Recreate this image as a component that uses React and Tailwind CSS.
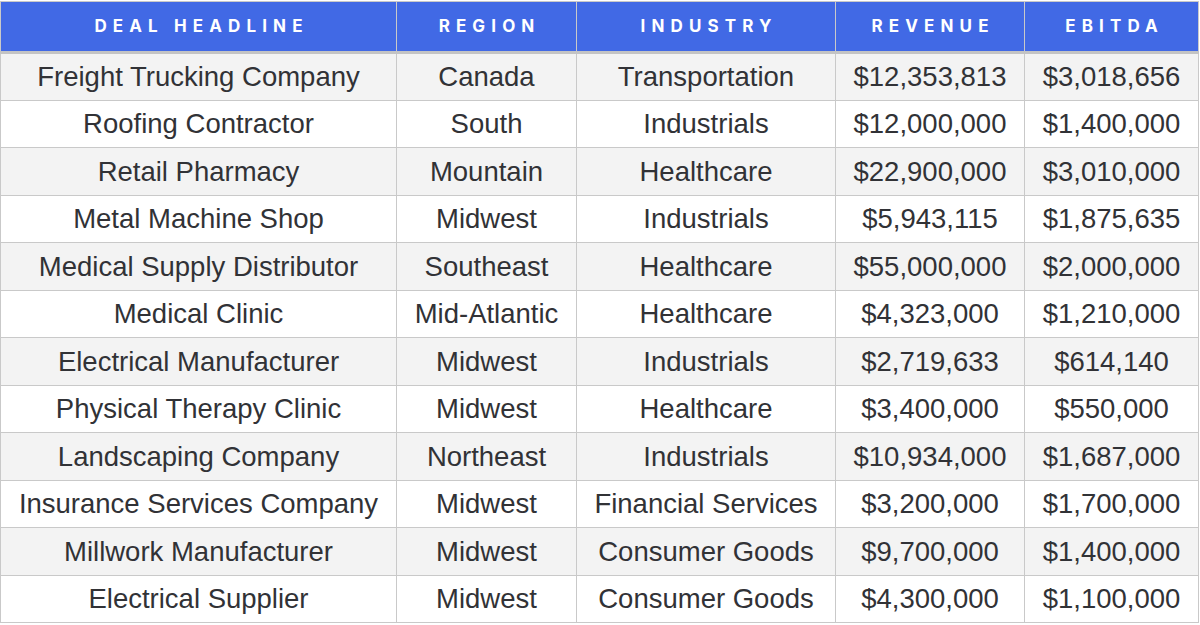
import React from "react";

const deals = [
  ["Freight Trucking Company", "Canada", "Transportation", "$12,353,813", "$3,018,656"],
  ["Roofing Contractor", "South", "Industrials", "$12,000,000", "$1,400,000"],
  ["Retail Pharmacy", "Mountain", "Healthcare", "$22,900,000", "$3,010,000"],
  ["Metal Machine Shop", "Midwest", "Industrials", "$5,943,115", "$1,875,635"],
  ["Medical Supply Distributor", "Southeast", "Healthcare", "$55,000,000", "$2,000,000"],
  ["Medical Clinic", "Mid-Atlantic", "Healthcare", "$4,323,000", "$1,210,000"],
  ["Electrical Manufacturer", "Midwest", "Industrials", "$2,719,633", "$614,140"],
  ["Physical Therapy Clinic", "Midwest", "Healthcare", "$3,400,000", "$550,000"],
  ["Landscaping Company", "Northeast", "Industrials", "$10,934,000", "$1,687,000"],
  ["Insurance Services Company", "Midwest", "Financial Services", "$3,200,000", "$1,700,000"],
  ["Millwork Manufacturer", "Midwest", "Consumer Goods", "$9,700,000", "$1,400,000"],
  ["Electrical Supplier", "Midwest", "Consumer Goods", "$4,300,000", "$1,100,000"],
];

const headers = ["Deal Headline", "Region", "Industry", "Revenue", "EBITDA"];
const widths = ["w-[396px]", "w-[180px]", "w-[259px]", "w-[189px]", "w-[174px]"];

const App = () => {
  return (
    <div className="w-[1200px] h-[625px] bg-white overflow-hidden pt-px">
      <table className="table-fixed border-collapse w-[1198px] font-['Liberation_Sans',Arial,sans-serif]">
        <thead>
          <tr className="h-[51px] bg-[#4169e5]">
            {headers.map((h, i) => (
              <th
                key={h}
                className={`${widths[i]} border border-[#c9c9c9] border-b-[3px] border-b-[#c4c4c4] p-0 text-center text-white text-[17px] font-bold uppercase tracking-[0.36em] font-['Inter',sans-serif]`}
              >
                <span className="pl-[0.36em]">{h}</span>
              </th>
            ))}
          </tr>
        </thead>
        <tbody>
          {deals.map((row, index) => (
            <tr key={index} className={`h-[47.5px] ${index % 2 === 0 ? "bg-[#f3f3f3]" : "bg-white"}`}>
              {row.map((cell, i) => (
                <td
                  key={i}
                  className="border border-[#c9c9c9] p-0 text-center text-[27.5px] leading-none text-[#313236] whitespace-nowrap"
                >
                  {cell}
                </td>
              ))}
            </tr>
          ))}
        </tbody>
      </table>
    </div>
  );
};

export default App;
